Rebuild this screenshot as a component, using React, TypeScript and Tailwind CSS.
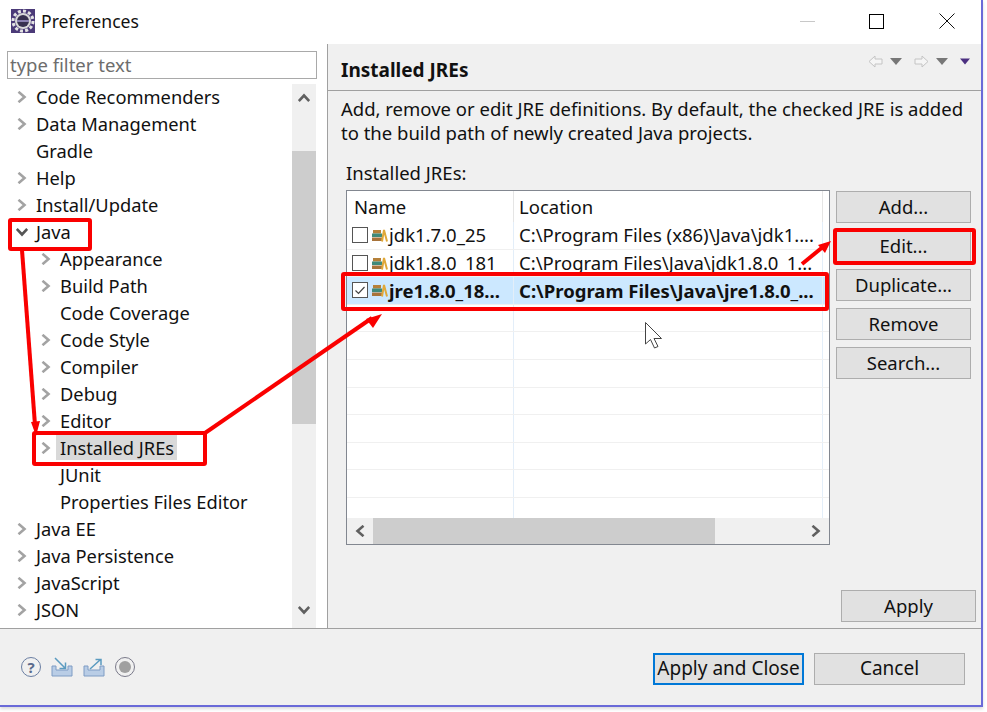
const FONT = 'font-["Noto_Sans",sans-serif]';

type Node = { label: string; indent?: boolean; arrow?: 'right' | 'down'; selected?: boolean };

const TREE: Node[] = [
  { label: 'Code Recommenders', arrow: 'right' },
  { label: 'Data Management', arrow: 'right' },
  { label: 'Gradle' },
  { label: 'Help', arrow: 'right' },
  { label: 'Install/Update', arrow: 'right' },
  { label: 'Java', arrow: 'down' },
  { label: 'Appearance', indent: true, arrow: 'right' },
  { label: 'Build Path', indent: true, arrow: 'right' },
  { label: 'Code Coverage', indent: true },
  { label: 'Code Style', indent: true, arrow: 'right' },
  { label: 'Compiler', indent: true, arrow: 'right' },
  { label: 'Debug', indent: true, arrow: 'right' },
  { label: 'Editor', indent: true, arrow: 'right' },
  { label: 'Installed JREs', indent: true, arrow: 'right', selected: true },
  { label: 'JUnit', indent: true },
  { label: 'Properties Files Editor', indent: true },
  { label: 'Java EE', arrow: 'right' },
  { label: 'Java Persistence', arrow: 'right' },
  { label: 'JavaScript', arrow: 'right' },
  { label: 'JSON', arrow: 'right' },
];

const JRES = [
  { name: 'jdk1.7.0_25', location: 'C:\\Program Files (x86)\\Java\\jdk1....', checked: false },
  { name: 'jdk1.8.0_181', location: 'C:\\Program Files\\Java\\jdk1.8.0_1...', checked: false },
  { name: 'jre1.8.0_18...', location: 'C:\\Program Files\\Java\\jre1.8.0_...', checked: true },
];

function Chevron({ dir, color = '#a3a3a3' }: { dir: 'right' | 'down' | 'up' | 'left'; color?: string }) {
  const d = {
    right: 'M2.5 0.8 L8.5 6 L2.5 11.2',
    left: 'M9.5 0.8 L3.5 6 L9.5 11.2',
    down: 'M0.8 3 L6 8.5 L11.2 3',
    up: 'M0.8 9 L6 3.5 L11.2 9',
  }[dir];
  return (
    <svg width="12" height="12" viewBox="0 0 12 12" fill="none">
      <path d={d} stroke={color} strokeWidth="2.6" />
    </svg>
  );
}

function TreeRow({ node }: { node: Node }) {
  return (
    <div className={`flex h-[27px] items-center ${node.indent ? 'pl-[40px]' : 'pl-[16px]'}`}>
      <div className="flex w-[20px] shrink-0 items-center">
        {node.arrow && <Chevron dir={node.arrow} color={node.arrow === 'down' ? '#555555' : '#a3a3a3'} />}
      </div>
      <span className={`whitespace-nowrap leading-[25px] ${node.selected ? '-ml-[4px] bg-[#d9d9d9] pr-[3px] pl-[4px]' : ''}`}>{node.label}</span>
    </div>
  );
}

function Btn({ children, className = '' }: { children: string; className?: string }) {
  return (
    <div className={`flex items-center justify-center border-[#adadad] bg-[#e1e1e1] ${className}`}>
      {children}
    </div>
  );
}

function JreIcon() {
  return (
    <svg width="16" height="14" viewBox="0 0 16 14" className="shrink-0">
      <rect x="1" y="2" width="8" height="3.5" fill="#b5813a" />
      <rect x="0" y="5.5" width="10" height="3.5" fill="#3f8a7a" />
      <rect x="0" y="9.5" width="10" height="3.5" fill="#a8733a" />
      <path d="M10 13.5 L12 2 L15 13.5" fill="none" stroke="#e0a838" strokeWidth="2" />
    </svg>
  );
}

function Checkbox({ checked }: { checked: boolean }) {
  return (
    <div className="mr-[4px] flex h-[16px] w-[16px] shrink-0 items-center justify-center border border-[#555555] bg-white">
      {checked && (
        <svg width="12" height="12" viewBox="0 0 12 12" fill="none">
          <path d="M1.5 6.5 L4.5 9.5 L10.5 3" stroke="#444444" strokeWidth="1.2" />
        </svg>
      )}
    </div>
  );
}

function NavArrow({ dir }: { dir: 'left' | 'right' }) {
  return (
    <svg width="15" height="13" viewBox="0 0 15 13" fill="#f5f5f5" stroke="#c4c4c4">
      <path d={dir === 'left' ? 'M1 6.5 L7 1 V4 H14 V9 H7 V12 Z' : 'M14 6.5 L8 1 V4 H1 V9 H8 V12 Z'} />
    </svg>
  );
}

function Caret({ color = '#777777', w = 12 }: { color?: string; w?: number }) {
  return (
    <svg width={w} height="7" viewBox="0 0 12 7">
      <path d="M0 0 H12 L6 7 Z" fill={color} />
    </svg>
  );
}

function TrayIcon({ out }: { out?: boolean }) {
  return (
    <svg width="22" height="20" viewBox="0 0 22 20" fill="none">
      <path d="M1 9 H5 V13 H17 V9 H21 V19 H1 Z" fill="#b9cde6" stroke="#7f9cc4" />
      <path
        d={out ? 'M7 12 L17 3 M12.5 2.5 H18 V8' : 'M4 1 L14 11 M14.5 5.5 V11.5 H8.5'}
        stroke="#5b9bc0"
        strokeWidth="1.5"
      />
    </svg>
  );
}

function Annotations() {
  const red = '#fa0000';
  return (
    <svg className="absolute top-0 left-0" width="987" height="712" fill="none">
      <g stroke={red} strokeWidth="4">
        <rect x="10" y="220" width="80" height="29" rx="1" />
        <rect x="34" y="433" width="171" height="31" rx="1" />
        <rect x="343" y="274" width="484" height="35" rx="1" />
        <rect x="835" y="230" width="139" height="33" rx="1" />
        <path d="M22 250 L35 425" />
        <path d="M205 433 L372 318" />
        <path d="M802 264 L824 246" />
      </g>
      <path d="M31 422 L40 421 L36 436 Z" fill={red} />
      <path d="M366 319 L382 314 L373 328 Z" fill={red} />
      <path d="M818 245 L831 241 L825 253 Z" fill={red} />
      <path
        d="M645.5 322.5 V344 L650.5 339.5 L654.5 348 L658 346.5 L654 338.5 L661.5 338.5 Z"
        fill="#ffffff"
        stroke="#444444"
      />
    </svg>
  );
}

export default function App() {
  return (
    <div className={`relative h-[712px] w-[987px] overflow-hidden bg-white text-[18.5px] text-[#111111] ${FONT}`}>
      <div className="flex h-[707px] w-[983px] flex-col border-r-2 border-b-2 border-[#6a6ad8] bg-white shadow-[0_2px_3px_rgba(0,0,0,0.15)]">
        {/* title bar */}
        <div className="flex h-[44px] shrink-0 items-center pb-[2px] pl-[11px]">
          <svg width="24" height="24" viewBox="0 0 24 24" className="mr-[6px]">
            <rect width="24" height="24" fill="#4b3a78" />
            <circle cx="12" cy="12" r="10" fill="none" stroke="#e4e4e4" strokeWidth="3" strokeDasharray="3 2.2" />
            <circle cx="12" cy="12" r="8" fill="#d8d8d8" />
            <circle cx="12" cy="12" r="6" fill="#37304f" />
            <rect x="6" y="11" width="12" height="2" fill="#8a80b0" />
          </svg>
          <span className="text-[17.6px]">Preferences</span>
          <div className="ml-auto flex items-center">
            <div className="mr-[54px] h-px w-[15px] bg-[#c8c8c8]" />
            <div className="mr-[55px] h-[15px] w-[15px] border border-black" />
            <svg width="16" height="16" viewBox="0 0 16 16" className="mr-[26px]">
              <path d="M0.5 0.5 L15.5 15.5 M15.5 0.5 L0.5 15.5" stroke="#111111" strokeWidth="1" />
            </svg>
          </div>
        </div>

        {/* panes */}
        <div className="flex min-h-0 flex-1">
          <div className="flex w-[328px] shrink-0 flex-col border-r border-[#a0a0a0] pt-[7px] pl-[7px]">
            <div className="mr-[10px] flex h-[28px] shrink-0 items-center border border-[#a9a9a9] px-[2px] text-[#6d6d6d]">
              type filter text
            </div>
            <div className="mt-[5px] -ml-[7px] flex min-h-0 flex-1">
              <div className="-mt-px flex-1 overflow-hidden text-[18.3px]">
                {TREE.map((n) => (
                  <TreeRow key={n.label} node={n} />
                ))}
              </div>
              <div className="mr-[11px] flex w-[24px] shrink-0 flex-col bg-[#f0f0f0]">
                <div className="flex h-[67px] shrink-0 justify-center pt-[8px]">
                  <Chevron dir="up" color="#606060" />
                </div>
                <div className="h-[273px] shrink-0 bg-[#cdcdcd]" />
                <div className="mt-auto flex h-[24px] justify-center">
                  <Chevron dir="down" color="#606060" />
                </div>
              </div>
            </div>
          </div>

          <div className="flex min-w-0 flex-1 flex-col bg-[#f0f0f0]">
            <div className="flex h-[47px] shrink-0 items-start border-b border-[#a0a0a0] pl-[13px]">
              <span className="mt-[13px] text-[19px] font-bold leading-[26px]">Installed JREs</span>
              <div className="mt-[11px] ml-auto flex items-center pr-[11px]">
                <NavArrow dir="left" />
                <div className="mr-[12px] ml-[7px]"><Caret /></div>
                <NavArrow dir="right" />
                <div className="mr-[12px] ml-[7px]"><Caret /></div>
                <Caret color="#4b2f80" w={10} />
              </div>
            </div>

            <div className="flex min-h-0 flex-1 flex-col pl-[13px]">
              <p className="mt-[6px] w-[632px] leading-[24px]">
                Add, remove or edit JRE definitions. By default, the checked JRE is added to the build path of newly created Java projects.
              </p>
              <div className="mt-[16px] ml-[5px] leading-[24px]">Installed JREs:</div>
              <div className="mt-[5px] ml-[5px] flex">
                <div className="flex h-[355px] w-[484px] shrink-0 flex-col border border-[#828790] bg-white">
                  <div className="flex h-[31px] shrink-0">
                    <div className="flex w-[167px] items-center border-r border-[#e5e5e5] pl-[7px]">Name</div>
                    <div className="flex w-[309px] items-center border-r border-[#e5e5e5] pl-[5px]">Location</div>
                  </div>
                  <div className="min-h-0 flex-1 overflow-hidden">
                    {JRES.map((j) => (
                      <div key={j.name} className={`flex h-[27.6px] border-b border-[#f0f0f0] ${j.checked ? 'bg-[#cce8ff] font-bold' : ''}`}>
                        <div className="flex w-[167px] items-center overflow-hidden whitespace-nowrap border-r border-[#e3eef9] pl-[5px]">
                          <Checkbox checked={j.checked} />
                          <JreIcon />
                          <span className="ml-px">{j.name}</span>
                        </div>
                        <div className="flex w-[309px] items-center overflow-hidden whitespace-nowrap border-r border-[#e3eef9] pl-[5px]">
                          {j.location}
                        </div>
                      </div>
                    ))}
                    {[0, 1, 2, 3, 4, 5, 6, 7].map((i) => (
                      <div key={i} className="flex h-[27.6px] border-b border-[#f0f0f0]">
                        <div className="w-[167px] border-r border-[#e3eef9]" />
                        <div className="w-[309px] border-r border-[#e3eef9]" />
                      </div>
                    ))}
                  </div>
                  <div className="flex h-[26px] shrink-0 items-center bg-[#f0f0f0]">
                    <div className="flex w-[26px] justify-center"><Chevron dir="left" color="#606060" /></div>
                    <div className="h-full w-[342px] bg-[#cdcdcd]" />
                    <div className="ml-auto flex w-[26px] justify-center"><Chevron dir="right" color="#606060" /></div>
                  </div>
                </div>
                <div className="ml-[6px] flex w-[135px] shrink-0 flex-col gap-[7px] pt-px">
                  {['Add...', 'Edit...', 'Duplicate...', 'Remove', 'Search...'].map((b) => (
                    <Btn key={b} className="h-[32px] border">{b}</Btn>
                  ))}
                </div>
              </div>
              <div className="mt-auto mb-[6px] flex justify-end pr-[5px]">
                <Btn className="h-[32px] w-[135px] border">Apply</Btn>
              </div>
            </div>
          </div>
        </div>

        {/* footer */}
        <div className="flex h-[77px] shrink-0 items-center border-t border-[#a0a0a0] bg-[#f0f0f0] pr-[16px] pl-[21px]">
          <div className="flex items-center gap-[10px]">
            <div className="flex h-[20px] w-[20px] items-center justify-center rounded-full border border-[#6b7fa3] text-[15px] font-bold leading-none text-[#5a6b8c]">?</div>
            <TrayIcon />
            <TrayIcon out />
            <div className="flex h-[20px] w-[20px] items-center justify-center rounded-full border border-[#7a7a8a]">
              <div className="h-[12px] w-[12px] rounded-full bg-[#a0a0a0]" />
            </div>
          </div>
          <div className="ml-auto flex gap-[10px] pt-[3px] text-[19px]">
            <Btn className="h-[32px] w-[151px] border-2 !border-[#0078d7]">Apply and Close</Btn>
            <Btn className="h-[32px] w-[151px] border">Cancel</Btn>
          </div>
        </div>
      </div>
      <Annotations />
    </div>
  );
}
